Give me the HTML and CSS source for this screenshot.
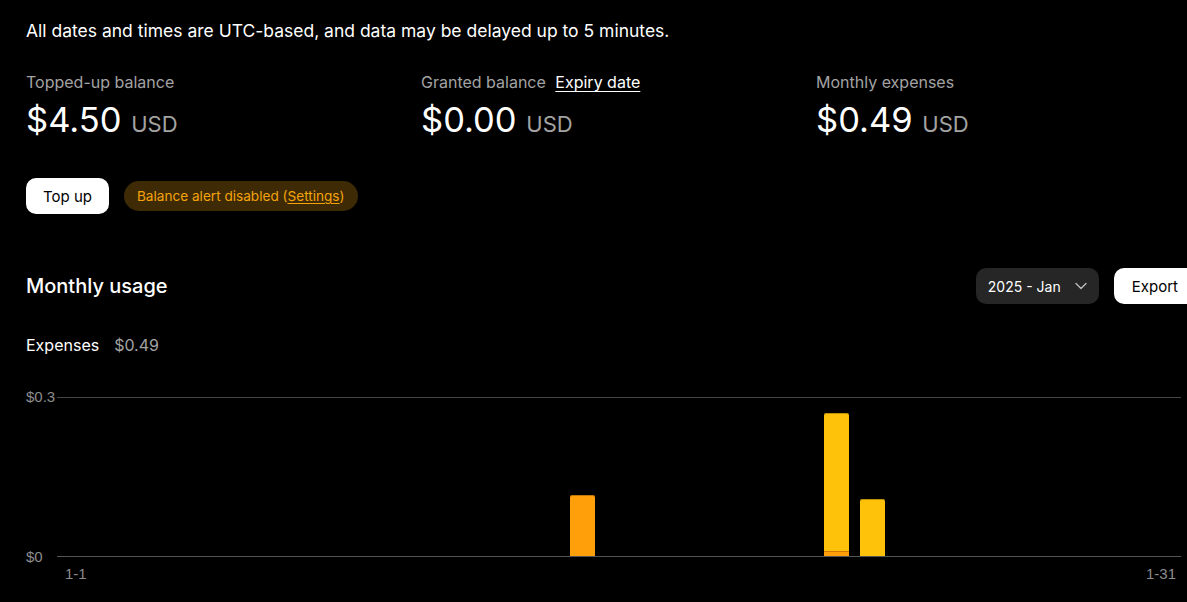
FILE: index.html
```html
<!DOCTYPE html>
<html lang="en">
<head>
<meta charset="UTF-8" />
<meta name="viewport" content="width=device-width, initial-scale=1" />
<title>Usage</title>
<link rel="stylesheet" href="styles.css">
</head>
<body>

<div class="page">
  <p class="note">All dates and times are UTC-based, and data may be delayed up to 5 minutes.</p>

  <div class="stats">
    <div class="stat">
      <div class="stat-label">Topped-up balance</div>
      <div class="stat-value">$4.50 <span class="unit">USD</span></div>
    </div>
    <div class="stat">
      <div class="stat-label">Granted balance <a href="#" class="link">Expiry date</a></div>
      <div class="stat-value">$0.00 <span class="unit">USD</span></div>
    </div>
    <div class="stat">
      <div class="stat-label">Monthly expenses</div>
      <div class="stat-value">$0.49 <span class="unit">USD</span></div>
    </div>
  </div>

  <div class="actions">
    <button class="btn">Top up</button>
    <span class="alert">Balance alert disabled (<a href="#">Settings</a>)</span>
  </div>

  <div class="usage-head">
    <h2>Monthly usage</h2>
    <div class="tools">
      <div class="select">2025 - Jan
        <svg width="14" height="14" viewBox="0 0 14 14"><path d="M2 4.5l5 5 5-5" fill="none" stroke="#bbb" stroke-width="1.4" stroke-linecap="round" stroke-linejoin="round"/></svg>
      </div>
      <button class="btn">Export</button>
    </div>
  </div>

  <div class="summary"><span>Expenses</span><span class="muted">$0.49</span></div>

  <div class="chart">
    <div class="y-axis">
      <span>$0.3</span>
      <span>$0</span>
    </div>
    <div class="plot" id="plot"></div>
    <div></div>
    <div class="x-axis"><span>1-1</span><span>1-31</span></div>
  </div>
</div>

<script>
const data = { 15: [0.115, 0], 22: [0.009, 0.261], 23: [0, 0.108] };
const plot = document.getElementById("plot");
const scale = 159 / 0.3;
for (let d = 1; d <= 31; d++) {
  const cell = document.createElement("div");
  cell.className = "day";
  if (data[d]) {
    const stack = document.createElement("div");
    stack.className = "stack";
    const [a, b] = data[d];
    if (b) {
      const y = document.createElement("div");
      y.className = "bar yellow";
      y.style.height = Math.round(b * scale) + "px";
      stack.appendChild(y);
    }
    if (a) {
      const o = document.createElement("div");
      o.className = "bar orange";
      o.style.height = Math.round(a * scale) + "px";
      stack.appendChild(o);
    }
    cell.appendChild(stack);
  }
  plot.appendChild(cell);
}
</script>

</body>
</html>
```

FILE: styles.css
```css
html, body {
  margin: 0;
  background: #000;
  overflow: hidden;
}
body {
  color: #fff;
  font-family: Inter, "Noto Sans", sans-serif;
}
.page {
  width: 1185px;
  padding: 18px 0 0 26px;
}
.note {
  margin: 0;
  font-size: 17.5px;
  line-height: 26px;
}
.stats {
  display: grid;
  grid-template-columns: repeat(3, 395px);
  margin-top: 26px;
}
.stat-label {
  color: #a3a3a3;
  font-size: 16px;
  line-height: 24px;
}
.stat-label .link {
  color: #fff;
  margin-left: 5px;
  text-decoration: underline;
  text-underline-offset: 3px;
}
.stat-value {
  font-size: 34.5px;
  line-height: 40px;
  margin-top: 6px;
}
.unit {
  color: #a3a3a3;
  font-size: 22px;
}
.actions {
  display: flex;
  align-items: center;
  gap: 15px;
  margin-top: 34px;
}
.btn {
  background: #fff;
  color: #000;
  border: none;
  border-radius: 10px;
  font-family: inherit;
  font-size: 15px;
  height: 36px;
  padding: 0 17px;
  white-space: nowrap;
  cursor: pointer;
}
.alert {
  background: #3e2b06;
  color: #f5a30b;
  font-size: 13.6px;
  line-height: 30px;
  padding: 0 13px;
  border-radius: 15px;
}
.alert a {
  color: #f5a30b;
  text-underline-offset: 2px;
}
.usage-head {
  display: flex;
  justify-content: space-between;
  align-items: center;
  margin: 54px 15px 0 0;
}
.usage-head h2 {
  margin: 0;
  font-size: 20px;
  font-weight: 500;
}
.tools {
  display: flex;
  gap: 15px;
  align-items: center;
}
.select {
  display: flex;
  align-items: center;
  justify-content: space-between;
  background: #262626;
  border-radius: 10px;
  height: 36px;
  padding: 0 11px 0 12px;
  font-size: 14px;
  width: 123px;
  white-space: nowrap;
  box-sizing: border-box;
}
.tools .btn {
  padding: 0 18px;
}
.summary {
  display: flex;
  gap: 15px;
  margin-top: 29px;
  font-size: 16px;
  line-height: 24px;
}
.muted {
  color: #a3a3a3;
}
.chart {
  display: grid;
  grid-template-columns: 31px 1124px;
  margin-top: 40px;
  font-family: "Liberation Sans", Arial, sans-serif;
  font-size: 15px;
  color: #8c8c8c;
}
.y-axis {
  display: flex;
  flex-direction: column;
  justify-content: space-between;
  height: 176px;
  margin: -8px 0;
  line-height: 16px;
}
.plot {
  display: flex;
  align-items: flex-end;
  height: 158px;
  border-top: 1px solid #444;
  border-bottom: 1px solid #555;
}
.day {
  flex: 1;
  display: flex;
  justify-content: center;
}
.stack {
  width: 25px;
  display: flex;
  flex-direction: column;
}
.bar {
  box-shadow: inset 0 1px 0 rgba(0,0,0,0.25);
  border-radius: 2px 2px 0 0;
}
.yellow {
  background: #ffc20a;
}
.orange {
  background: #ff9f0a;
}
.yellow + .orange {
  border-radius: 0;
  box-shadow: inset 0 1px 0 rgba(180,90,0,0.6);
}
.x-axis {
  display: flex;
  justify-content: space-between;
  padding: 9px 5px 0 8px;
  line-height: 16px;
}
```
